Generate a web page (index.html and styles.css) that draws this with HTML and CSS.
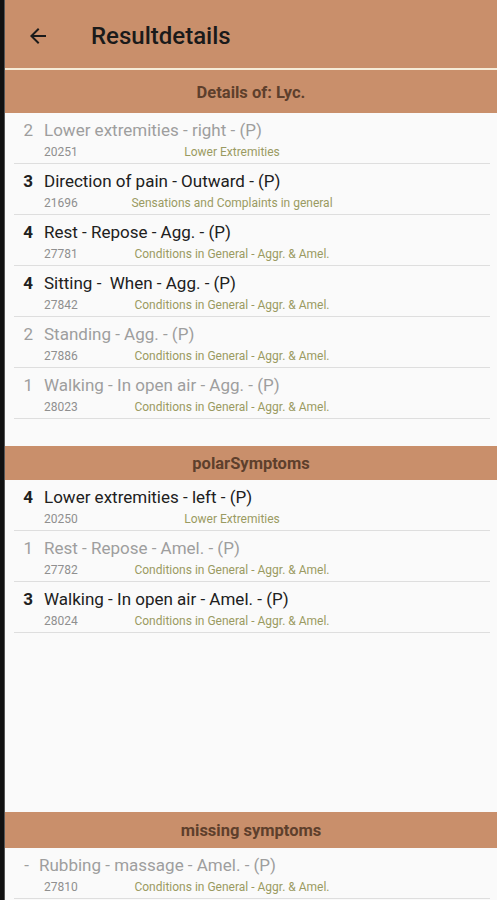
FILE: index.html
```html
<!DOCTYPE html>
<html>
<head>
<meta charset="utf-8">
<link rel="stylesheet" href="styles.css">
</head>
<body>
<div class="screen">
  <div class="edge"></div>
  <div class="app">
    <header class="appbar">
      <svg class="back" width="24" height="24" viewBox="0 0 24 24"><path d="M20 11H7.83l5.59-5.59L12 4l-8 8 8 8 1.41-1.41L7.83 13H20v-2z" fill="#1a1a1a"/></svg>
      <h1 class="title">Resultdetails</h1>
    </header>
    <div class="rule"></div>

    <section class="section first">
      <h2 class="sec-head big">Details of: Lyc.</h2>
      <ul class="list">
        <li class="row dim"><span class="grade">2</span><div class="body"><div class="name">Lower extremities - right - (P)</div><div class="sub"><span class="code">20251</span><span class="cat">Lower Extremities</span></div></div></li>
        <li class="row"><span class="grade">3</span><div class="body"><div class="name">Direction of pain - Outward - (P)</div><div class="sub"><span class="code">21696</span><span class="cat">Sensations and Complaints in general</span></div></div></li>
        <li class="row"><span class="grade">4</span><div class="body"><div class="name">Rest - Repose - Agg. - (P)</div><div class="sub"><span class="code">27781</span><span class="cat">Conditions in General - Aggr. &amp; Amel.</span></div></div></li>
        <li class="row"><span class="grade">4</span><div class="body"><div class="name">Sitting -&nbsp; When - Agg. - (P)</div><div class="sub"><span class="code">27842</span><span class="cat">Conditions in General - Aggr. &amp; Amel.</span></div></div></li>
        <li class="row dim"><span class="grade">2</span><div class="body"><div class="name">Standing - Agg. - (P)</div><div class="sub"><span class="code">27886</span><span class="cat">Conditions in General - Aggr. &amp; Amel.</span></div></div></li>
        <li class="row dim"><span class="grade">1</span><div class="body"><div class="name">Walking - In open air - Agg. - (P)</div><div class="sub"><span class="code">28023</span><span class="cat">Conditions in General - Aggr. &amp; Amel.</span></div></div></li>
      </ul>
    </section>

    <section class="section polar">
      <h2 class="sec-head">polarSymptoms</h2>
      <ul class="list">
        <li class="row"><span class="grade">4</span><div class="body"><div class="name">Lower extremities - left - (P)</div><div class="sub"><span class="code">20250</span><span class="cat">Lower Extremities</span></div></div></li>
        <li class="row dim"><span class="grade">1</span><div class="body"><div class="name">Rest - Repose - Amel. - (P)</div><div class="sub"><span class="code">27782</span><span class="cat">Conditions in General - Aggr. &amp; Amel.</span></div></div></li>
        <li class="row"><span class="grade">3</span><div class="body"><div class="name">Walking - In open air - Amel. - (P)</div><div class="sub"><span class="code">28024</span><span class="cat">Conditions in General - Aggr. &amp; Amel.</span></div></div></li>
      </ul>
    </section>

    <section class="section missing">
      <h2 class="sec-head">missing symptoms</h2>
      <ul class="list">
        <li class="row dim dash"><span class="grade">-</span><div class="body"><div class="name">Rubbing - massage - Amel. - (P)</div><div class="sub"><span class="code">27810</span><span class="cat">Conditions in General - Aggr. &amp; Amel.</span></div></div></li>
      </ul>
    </section>
  </div>
</div>
</body>
</html>
```
FILE: styles.css
```css
* { box-sizing: border-box; }
html, body { margin: 0; padding: 0; }
body {
  width: 497px;
  height: 900px;
  overflow: hidden;
  font-family: Roboto, "Noto Sans", "Liberation Sans", sans-serif;
  background: #fafafa;
}
.screen { display: flex; height: 900px; }
.edge {
  width: 5px;
  flex: none;
  background: #111;
  border-right: 1px solid #555;
}
.app { flex: 1; display: flex; flex-direction: column; background: #fafafa; }

.appbar {
  height: 68px;
  background: #c98f6b;
  display: flex;
  align-items: center;
  padding-left: 21px;
  padding-top: 3px;
}
.back { flex: none; }
.title {
  margin: 0 0 0 41px;
  font-size: 24px;
  font-weight: 500;
  color: #1a1a1a;
}
.rule { height: 2px; background: #f6ecd8; }

.section { display: flex; flex-direction: column; }
.sec-head {
  margin: 0;
  height: 34px;
  background: #c98f6b;
  color: #5e3f2c;
  font-size: 16.5px;
  font-weight: 700;
  display: flex;
  align-items: center;
  justify-content: center;
}
.sec-head.big { height: 43px; padding-top: 2px; }
.polar { margin-top: 27px; }
.missing { margin-top: auto; margin-bottom: 1px; }
.missing .sec-head { height: 36px; }

.list { list-style: none; margin: 0; padding: 0; }
.row {
  display: flex;
  margin: 0 7px 0 9px;
  height: 51px;
  padding-top: 6px;
  border-bottom: 1px solid #dedede;
  color: #202020;
}
.grade {
  width: 20px;
  flex: none;
  text-align: right;
  padding-right: 1px;
  font-size: 17px;
  font-weight: 700;
  line-height: 22px;
}
.body { margin-left: 10px; flex: 1; }
.name { font-size: 17px; line-height: 22px; white-space: nowrap; }
.sub {
  display: flex;
  margin-top: 4px;
  height: 14px;
  line-height: 14px;
  font-size: 12px;
}
.code { width: 60px; flex: none; color: #8f8f8f; }
.cat { width: 256px; flex: none; text-align: center; color: #9a9a62; white-space: nowrap; }

.row.dim { color: #9e9e9e; }
.row.dim .grade { font-weight: 400; }
.row.dash .grade { width: 25px; text-align: center; padding-right: 0; }
.row.dash .body { margin-left: 0; }
.row.dash .sub { margin-left: 5px; }
```
